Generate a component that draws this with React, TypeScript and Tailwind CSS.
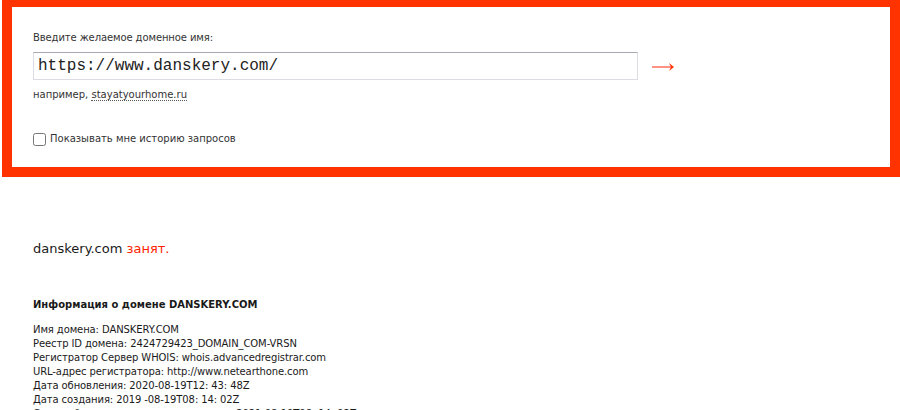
import { useState } from 'react';

const info = [
  'Имя домена: DANSKERY.COM',
  'Реестр ID домена: 2424729423_DOMAIN_COM-VRSN',
  'Регистратор Сервер WHOIS: whois.advancedregistrar.com',
  'URL-адрес регистратора: http://www.netearthone.com',
  'Дата обновления: 2020-08-19T12: 43: 48Z',
  'Дата создания: 2019 -08-19T08: 14: 02Z',
  'Срок действия регистрации истекает: 2021-08-19T08: 14: 02Z',
];

export default function App() {
  const [domain, setDomain] = useState('https://www.danskery.com/');
  const [history, setHistory] = useState(false);

  return (
    <div className="w-[900px] h-[410px] overflow-hidden bg-white text-[#1a1a1a] font-['DejaVu_Sans',sans-serif]">
      <form
        onSubmit={e => e.preventDefault()}
        className="ml-[2px] h-[177px] border-[10px] border-t-[7px] border-[#ff3300] pl-[21px] pt-[24px]"
      >
        <div className="text-[10px] leading-[14px] tracking-[-0.1px] text-[#333]">Введите желаемое доменное имя:</div>

        <div className="mt-[7px] flex items-center">
          <input
            value={domain}
            onChange={e => setDomain(e.target.value)}
            className="w-[605px] h-[28px] border border-[#dcdce4] border-t-[#a9a9b0] px-[4px] text-[16px] font-['Liberation_Mono',monospace] text-[#222] outline-none"
          />
          <button type="submit" className="ml-[14px] mt-[1px]">
            <svg width="24" height="10" viewBox="0 0 24 10">
              <rect x="0" y="4" width="20" height="2" fill="#ff9185" />
              <path d="M17 1 L22 5 L17 9 L19 5 Z" fill="#ff3300" />
            </svg>
          </button>
        </div>

        <div className="mt-[8px] text-[10px] leading-[14px] text-[#333]">
          например,{' '}
          <span className="border-b border-dotted border-[#555]">stayatyourhome.ru</span>
        </div>

        <label className="mt-[30px] flex items-center gap-[4px] text-[10px] leading-[14px] text-[#333]">
          <input
            type="checkbox"
            checked={history}
            onChange={e => setHistory(e.target.checked)}
            className="m-0 w-[13px] h-[13px]"
          />
          Показывать мне историю запросов
        </label>
      </form>

      <div className="pl-[33px]">
        <div className="mt-[63px] text-[13px] leading-[18px]">
          danskery.com <span className="text-[#ff2200]">занят.</span>
        </div>

        <div className="mt-[40px] text-[10px] leading-[14px] font-bold">Информация о домене DANSKERY.COM</div>

        <div className="mt-[11px] text-[10px] leading-[14px] tracking-[-0.1px]">
          {info.map(line => (
            <div key={line}>{line}</div>
          ))}
        </div>
      </div>
    </div>
  );
}
